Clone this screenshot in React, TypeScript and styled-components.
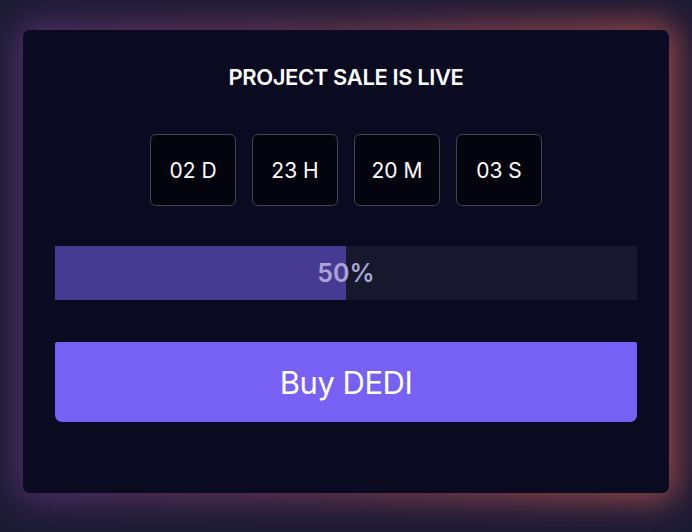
import React from 'react'
import styled, { createGlobalStyle } from 'styled-components'

type FillProps = {
  $percent: number
}

const GlobalStyle = createGlobalStyle`
  html, body {
    margin: 0;
    padding: 0;
    background: #1c1a33;
    font-family: Inter, "Noto Sans", sans-serif;
  }
`

const Page = styled.main`
  isolation: isolate;
  min-height: 532px;
  box-sizing: border-box;
  padding: 30px 23px 39px;
  background: #1c1a33;
`
const Card = styled.section`
  position: relative;
  display: flex;
  flex-direction: column;
  width: 646px;
  height: 463px;
  box-sizing: border-box;
  padding: 35px 32px 71px;
  border-radius: 7px;
  background: #0a0a20;

  &::before {
    content: '';
    position: absolute;
    inset: -7px;
    border-radius: 14px;
    background: linear-gradient(90deg, #4e2f68 0%, #663650 45%, #a04a48 100%);
    filter: blur(17px);
    z-index: -1;
  }
`
const Title = styled.h2`
  margin: 0;
  height: 24px;
  font-size: 22px;
  line-height: 24px;
  font-weight: 600;
  letter-spacing: -0.4px;
  color: #ffffff;
  text-align: center;
`
const Countdown = styled.div`
  display: flex;
  justify-content: center;
  gap: 16px;
  margin-top: 45px;
`
const TimeBox = styled.div`
  display: flex;
  align-items: center;
  justify-content: center;
  width: 86px;
  height: 72px;
  box-sizing: border-box;
  border: 1.5px solid #45454f;
  border-radius: 6px;
  background: #04040f;
  color: #ffffff;
  font-size: 21px;
`
const Progress = styled.div`
  position: relative;
  display: flex;
  align-items: center;
  justify-content: center;
  height: 54px;
  margin-top: 40px;
  background: #17172d;
`
const Fill = styled.div<FillProps>`
  position: absolute;
  left: 0;
  top: 0;
  bottom: 0;
  width: ${p => p.$percent}%;
  background: #473a93;
`
const Percent = styled.span`
  position: relative;
  font-size: 25px;
  font-weight: 600;
  color: #aba5d6;
`
const BuyButton = styled.button`
  height: 80px;
  margin-top: 42px;
  border: none;
  border-radius: 2px 2px 7px 7px;
  background: #7661f4;
  color: #ffffff;
  font-family: inherit;
  font-size: 31px;
  font-weight: 400;
  letter-spacing: -0.5px;
  cursor: pointer;
`

const countdown = ['02 D', '23 H', '20 M', '03 S']

function App() {
  const sold = 50

  return (
    <Page>
      <GlobalStyle />
      <Card>
        <Title>PROJECT SALE IS LIVE</Title>
        <Countdown>
          {countdown.map(t => (
            <TimeBox key={t}>{t}</TimeBox>
          ))}
        </Countdown>
        <Progress>
          <Fill $percent={sold} />
          <Percent>{sold}%</Percent>
        </Progress>
        <BuyButton>Buy DEDI</BuyButton>
      </Card>
    </Page>
  )
}

export default App
